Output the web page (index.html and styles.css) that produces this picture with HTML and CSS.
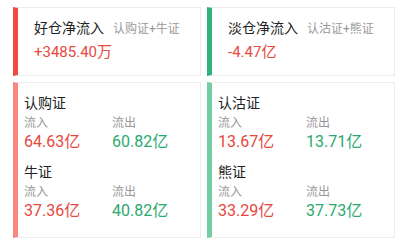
FILE: index.html
```html
<!DOCTYPE html>
<html lang="zh">
<head>
<meta charset="utf-8">
<link rel="stylesheet" href="styles.css">
</head>
<body>
<div class="grid">
  <div class="card summary bar-red">
    <div class="head"><span class="title">好仓净流入</span><span class="sub">认购证+牛证</span></div>
    <div class="total red">+3485.40万</div>
  </div>
  <div class="card summary bar-green">
    <div class="head"><span class="title">淡仓净流入</span><span class="sub">认沽证+熊证</span></div>
    <div class="total red">-4.47亿</div>
  </div>
  <div class="card detail bar-red-light">
    <div class="section">
      <div class="name">认购证</div>
      <div class="cols">
        <div class="col"><div class="label">流入</div><div class="val red">64.63亿</div></div>
        <div class="col"><div class="label">流出</div><div class="val green">60.82亿</div></div>
      </div>
    </div>
    <div class="section">
      <div class="name">牛证</div>
      <div class="cols">
        <div class="col"><div class="label">流入</div><div class="val red">37.36亿</div></div>
        <div class="col"><div class="label">流出</div><div class="val green">40.82亿</div></div>
      </div>
    </div>
  </div>
  <div class="card detail bar-green-light">
    <div class="section">
      <div class="name">认沽证</div>
      <div class="cols">
        <div class="col"><div class="label">流入</div><div class="val red">13.67亿</div></div>
        <div class="col"><div class="label">流出</div><div class="val green">13.71亿</div></div>
      </div>
    </div>
    <div class="section">
      <div class="name">熊证</div>
      <div class="cols">
        <div class="col"><div class="label">流入</div><div class="val red">33.29亿</div></div>
        <div class="col"><div class="label">流出</div><div class="val green">37.73亿</div></div>
      </div>
    </div>
  </div>
</div>
</body>
</html>
```
FILE: styles.css
```css
html, body {
  margin: 0;
  padding: 0;
  background: #fff;
}
body {
  font-family: Roboto, "Noto Sans CJK SC", sans-serif;
  color: #222;
  padding: 7px 14px 0 13px;
}
.grid {
  display: grid;
  grid-template-columns: 188px 188px;
  grid-template-rows: 69px 156px;
  column-gap: 6px;
  row-gap: 6px;
}
.card {
  box-sizing: border-box;
  border: 1px solid #ececec;
  border-left-width: 5px;
  border-left-style: solid;
  background: #fff;
}
.bar-red { border-left-color: #f04b43; }
.bar-green { border-left-color: #2eb47b; }
.bar-red-light { border-left-color: #f7877f; }
.bar-green-light { border-left-color: #73cfa3; }

.summary {
  padding: 10px 0 0 16px;
}
.head {
  display: flex;
  align-items: baseline;
  height: 20px;
  line-height: 20px;
}
.title {
  font-size: 14px;
  color: #222;
}
.sub {
  font-size: 12px;
  color: #999;
  margin-left: 9px;
}
.total {
  margin-top: 4px;
  font-size: 15px;
  line-height: 20px;
}
.red { color: #e8473e; }
.green { color: #2aa96e; }

.detail {
  padding: 10px 0 0 6px;
  display: flex;
  flex-direction: column;
  gap: 10px;
}
.name {
  font-size: 14px;
  line-height: 20px;
  margin-bottom: 2px;
}
.cols {
  display: grid;
  grid-template-columns: 88px 88px;
}
.label {
  font-size: 12px;
  line-height: 17px;
  color: #999;
}
.val {
  font-size: 16px;
  line-height: 20px;
}
```
